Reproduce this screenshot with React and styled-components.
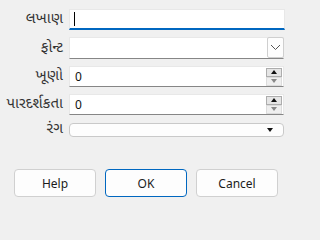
import React from "react";
import styled, { createGlobalStyle } from "styled-components";

const GlobalStyle = createGlobalStyle`
  html, body {
    margin: 0;
    padding: 0;
    background: #f0f0f0;
  }
  body {
    font-family: "Noto Sans Gujarati", "Noto Sans", "Open Sans", sans-serif;
  }
`;

const Dialog = styled.div`
  width: 293px;
  height: 210px;
  box-sizing: border-box;
  background: #f0f0f0;
  display: flex;
  flex-direction: column;
`;

const Form = styled.div`
  display: grid;
  grid-template-columns: 63px 216px;
  column-gap: 6px;
  row-gap: 7px;
  padding-top: 9px;
  align-items: center;
`;

const Label = styled.label`
  text-align: right;
  font-size: 15px;
  color: #333;
  white-space: nowrap;
  line-height: 1;
`;

const Field = styled.div`
  box-sizing: border-box;
  height: ${(p) => p.$h || 21}px;
  width: ${(p) => p.$w || 215}px;
  background: #ffffff;
  border: 1px solid #e8e8e8;
  border-bottom: ${(p) => (p.$focus ? "2px solid #0067c0" : "1px solid #868686")};
  display: flex;
  align-items: center;
  position: relative;
`;

const Caret = styled.span`
  width: 1px;
  height: 14px;
  background: #000;
  margin-left: 4px;
`;

const Value = styled.span`
  flex: 1;
  padding-left: 5px;
  font-family: "Noto Sans", "Open Sans", sans-serif;
  font-size: 12px;
  color: #111;
`;

const DropButton = styled.div`
  box-sizing: border-box;
  width: 17px;
  height: 21px;
  margin-right: -1px;
  margin-top: -1px;
  border: 1px solid #cfcfcf;
  border-radius: 2px;
  background: #fdfdfd;
  display: flex;
  align-items: center;
  justify-content: center;
`;

const Spin = styled.div`
  display: flex;
  flex-direction: column;
  margin-right: 1px;
`;

const SpinBtn = styled.div`
  box-sizing: border-box;
  width: 16px;
  height: 9px;
  border: 1px solid ${(p) => (p.$up ? "#adadad" : "#dcdcdc")};
  background: ${(p) => (p.$up ? "#e5e5e5" : "#efefef")};
  display: flex;
  align-items: center;
  justify-content: center;
`;

const Arrow = styled.span`
  width: 0;
  height: 0;
  border-left: 3.5px solid transparent;
  border-right: 3.5px solid transparent;
  ${(p) =>
    p.$up
      ? `border-bottom: 4px solid ${p.$c};`
      : `border-top: 4px solid ${p.$c};`}
`;

const ColorBox = styled.div`
  box-sizing: border-box;
  width: 215px;
  height: 14px;
  background: #fdfdfd;
  border: 1px solid #c9c9c9;
  border-radius: 4px;
  display: flex;
  align-items: center;
  justify-content: flex-end;
  padding-right: 10px;
`;

const Buttons = styled.div`
  display: flex;
  gap: 9px;
  padding-left: 14px;
  margin-top: 32px;
`;

const Button = styled.button`
  box-sizing: border-box;
  width: 82px;
  height: 28px;
  background: #fdfdfd;
  border: 1px solid ${(p) => (p.$primary ? "#0067c0" : "#d0d0d0")};
  border-radius: 4px;
  font-family: "Noto Sans", "Open Sans", sans-serif;
  font-size: 12px;
  color: #1b1b1b;
  padding: 0;
`;

const Chevron = () => (
  <svg width="11" height="7" viewBox="0 0 11 7">
    <path d="M1 1 L5.5 5.5 L10 1" fill="none" stroke="#555" strokeWidth="1" />
  </svg>
);

const SpinBox = ({ value }) => (
  <Field>
    <Value>{value}</Value>
    <Spin>
      <SpinBtn $up>
        <Arrow $up $c="#111" />
      </SpinBtn>
      <SpinBtn>
        <Arrow $c="#888" />
      </SpinBtn>
    </Spin>
  </Field>
);

export default function App() {
  return (
    <>
      <GlobalStyle />
      <Dialog>
        <Form>
          <Label>લખાણ</Label>
          <Field $focus $w={216}>
            <Caret />
          </Field>
          <Label>ફોન્ટ</Label>
          <Field $h={22}>
            <Value />
            <DropButton>
              <Chevron />
            </DropButton>
          </Field>
          <Label>ખૂણો</Label>
          <SpinBox value="0" />
          <Label>પારદર્શકતા</Label>
          <SpinBox value="0" />
          <Label>રંગ</Label>
          <ColorBox>
            <Arrow $c="#111" />
          </ColorBox>
        </Form>
        <Buttons>
          <Button>Help</Button>
          <Button $primary>OK</Button>
          <Button>Cancel</Button>
        </Buttons>
      </Dialog>
    </>
  );
}
